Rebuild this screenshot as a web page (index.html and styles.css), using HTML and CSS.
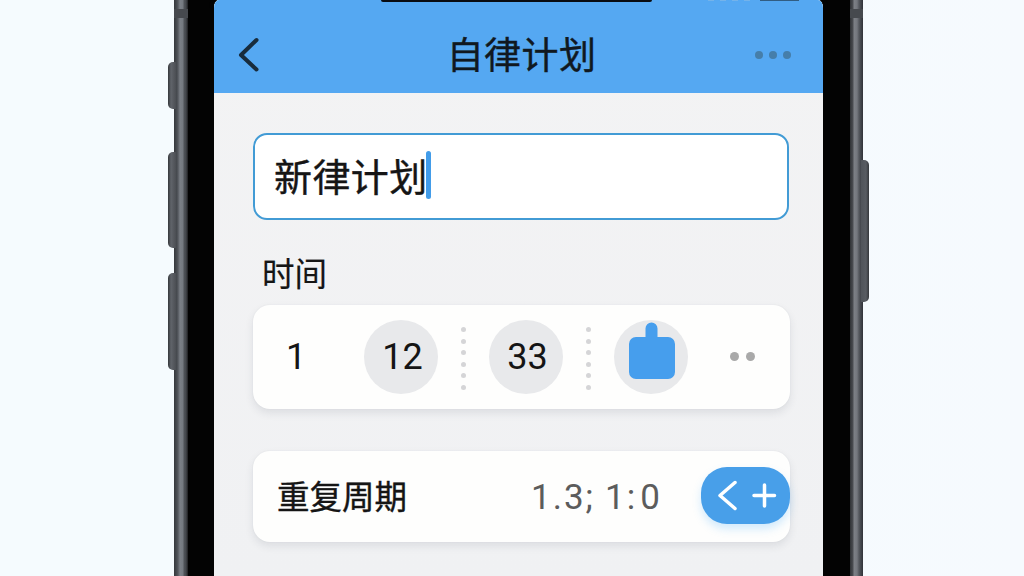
FILE: index.html
```html
<!DOCTYPE html>
<html lang="zh-CN">
<head>
<meta charset="utf-8">
<title>自律计划</title>
<link rel="stylesheet" href="styles.css">
</head>
<body>
<div class="phone">
  <div class="rail rail-left">
    <span class="seam"></span>
    <span class="side-key key-a"></span>
    <span class="side-key key-b"></span>
    <span class="side-key key-c"></span>
  </div>
  <div class="bezel"></div>
  <main class="screen">
    <header class="header">
      <span class="notch"></span>
      <span class="signal"></span>
      <span class="battery"></span>
      <svg class="back" viewBox="0 0 22 36"><path d="M18.5 3 3 18 18.5 32.5"/></svg>
      <h1 class="title">自律计划</h1>
      <div class="more"><i></i><i></i><i></i></div>
    </header>
    <div class="content">
      <div class="field"><span class="field-text">新律计划</span><span class="caret"></span></div>
      <h2 class="label">时间</h2>
      <section class="card time">
        <span class="num plain">1</span>
        <span class="num circle">12</span>
        <span class="dots"><i></i><i></i><i></i><i></i><i></i><i></i></span>
        <span class="num circle">33</span>
        <span class="dots"><i></i><i></i><i></i><i></i><i></i><i></i></span>
        <span class="circle">
          <svg class="plug" viewBox="0 0 74 74"><path d="M31.5 17V8.500a6 6 0 0 1 12 0V17H54a7 7 0 0 1 7 7v28a7 7 0 0 1-7 7H22a7 7 0 0 1-7-7V24a7 7 0 0 1 7-7z"/></svg>
        </span>
        <span class="pair"><i></i><i></i></span>
      </section>
      <section class="card repeat">
        <span class="repeat-label">重复周期</span>
        <span class="value"><span>1.3;</span><span>1:</span><span>0</span></span>
        <span class="stepper">
          <svg viewBox="0 0 89 57"><path d="M34 15.500 19 28.500 34 41.500M53 28.500h20.500M63.500 18v21"/></svg>
        </span>
      </section>
    </div>
  </main>
  <div class="bezel"></div>
  <div class="rail rail-right">
    <span class="seam"></span>
    <span class="side-key key-power"></span>
  </div>
</div>
</body>
</html>
```

FILE: styles.css
```css
* { box-sizing: border-box; }
body {
  margin: 0;
  width: 1024px;
  height: 576px;
  overflow: hidden;
  background: linear-gradient(90deg, #f5fbfe, #f5fbfe 60%, #f6fafe);
  font-family: Roboto, "Noto Sans CJK SC", sans-serif;
  color: #151515;
}
h1, h2 { margin: 0; font-weight: 400; }
svg { display: block; fill: none; stroke-linecap: round; stroke-linejoin: round; }
.phone {
  display: grid;
  grid-template-columns: 14px 26px 609px 27px 13px;
  width: 689px;
  height: 576px;
  margin-left: 174px;
}
.rail { position: relative; }
.rail-left { background: linear-gradient(90deg, #34373b 0, #4a4e53 3px, #55595f 4px, #7b8087 6px, #747980 9px, #505459 10px, #44474c 12px, #1c1d1f 14px); }
.rail-right { background: linear-gradient(90deg, #303236 0, #4b4d52 3px, #7d8086 4px, #74777e 7px, #55585e 9px, #42454b 11px, #303238 13px); }
.seam { position: absolute; left: 0; top: 9px; width: 100%; height: 9px; background: #46494e; }
.side-key { position: absolute; background: linear-gradient(90deg, #34373b, #60646a 3px, #4b4e53); }
.rail-left .side-key { left: -6px; width: 8px; border-radius: 5px 0 0 5px; }
.key-a { top: 62px; height: 47px; }
.key-b { top: 152px; height: 96px; }
.key-c { top: 273px; height: 97px; }
.key-power { left: 11px; top: 160px; width: 8px; height: 142px; border-radius: 0 5px 5px 0; background: linear-gradient(90deg, #50545a, #585c62 5px, #34373b); }
.bezel { background: #030303; }
.screen { background: linear-gradient(#f3f3f4, #f0f1f3); overflow: hidden; border-radius: 5px 5px 0 0 / 8px 8px 0 0; box-shadow: 0 0 0 5px #030303; clip-path: inset(0 -5px 0 -5px); }
.header {
  position: relative;
  display: grid;
  grid-template-columns: 120px 1fr 120px;
  align-items: center;
  height: 93px;
  padding-top: 16px;
  background: #55a8f2;
}
.notch { position: absolute; left: 167px; top: 0; width: 271px; height: 2px; background: #090c12; border-radius: 0 0 4px 4px; }
.signal { position: absolute; left: 494px; top: 0; width: 42px; height: 1px; background: repeating-linear-gradient(90deg, #74b3ea 0 6px, #55a8f2 6px 12px); }
.battery { position: absolute; left: 546px; top: 0; width: 39px; height: 1px; background: #315d83; }
.back { width: 22px; height: 36px; margin-left: 24px; stroke: #182c3d; stroke-width: 4; }
.title { font-size: 37px; line-height: 50px; letter-spacing: .4px; text-align: center; color: #101820; padding: 4px 0 0 6px; -webkit-text-stroke: .4px; }
.more { display: flex; gap: 6px; margin-left: 52px; }
.more i { width: 8px; height: 8px; border-radius: 50%; background: #467ea9; }
.content { padding: 40px 33px 0 39px; }
.field {
  display: flex;
  align-items: center;
  width: 536px;
  height: 87px;
  padding-left: 19px;
  border: 2.500px solid #429bd5;
  border-radius: 14px;
  background: #fff;
}
.field-text { font-size: 38px; line-height: 56px; letter-spacing: .4px; padding-top: 3px; -webkit-text-stroke: .4px; }
.caret { width: 5px; height: 48px; margin: -4px 0 0 -2px; border-radius: 3px; background: #429ce9; }
.label { height: 48px; margin: 31px 0 6px 9px; font-size: 32.500px; line-height: 48px; -webkit-text-stroke: .2px; }
.card { width: 537px; border-radius: 17px; background: #fefefd; box-shadow: 0 4px 8px rgba(40, 50, 65, .1), 0 0 2px rgba(40, 50, 65, .06); }
.time { display: flex; align-items: center; height: 104px; padding-left: 33px; }
.num { font-size: 36px; line-height: 42px; }
.plain { width: 78px; }
.circle { display: flex; align-items: center; justify-content: center; width: 74px; height: 74px; border-radius: 50%; background: #e8e9eb; }
.num.circle { padding-left: 3px; }
.dots { display: flex; flex-direction: column; align-items: center; gap: 6.500px; width: 51px; margin-top: 3px; }
.dots i { width: 5px; height: 5px; border-radius: 50%; background: #d5d5d7; }
.plug { width: 74px; height: 74px; fill: #469eed; }
.pair { display: flex; gap: 7px; margin: 0 0 1px 42px; }
.pair i { width: 9px; height: 9px; border-radius: 50%; background: #a9a9a9; }
.repeat { display: flex; align-items: center; height: 91px; margin-top: 42px; padding-left: 24px; }
.repeat-label { width: 254px; font-size: 32.500px; line-height: 48px; padding-top: 3px; -webkit-text-stroke: .4px; }
.value { display: flex; gap: 10px; width: 170px; font-size: 35px; line-height: 42px; letter-spacing: 2px; color: #5c5c5c; padding-top: 2px; }
.value span:last-child { margin-left: -7px; }
.stepper { width: 89px; height: 57px; border-radius: 26px; background: #489fe9; box-shadow: 0 5px 8px rgba(80, 175, 250, .25); margin-top: -2px; }
.stepper svg { width: 89px; height: 57px; stroke: #fff; stroke-width: 3.500; }
```
